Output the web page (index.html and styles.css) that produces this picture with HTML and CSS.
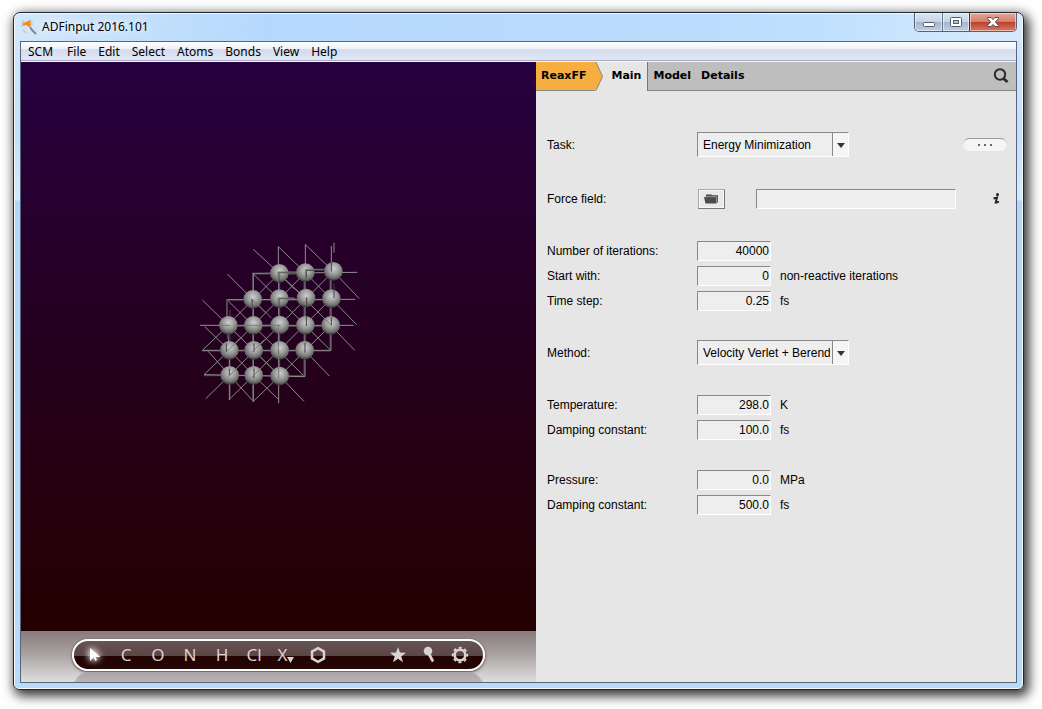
FILE: index.html
```html
<!DOCTYPE html>
<html lang="en">
<head>
<meta charset="utf-8">
<title>ADFinput 2016.101</title>
<link rel="stylesheet" href="styles.css">
</head>
<body>
<div class="window">
  <header class="titlebar">
    <svg class="app-icon" width="16" height="16" viewBox="0 0 16 16">
      <path d="M3 1Q0 4 1 8M2 10q1 3 4 4M8 1q3 1 3 5" fill="none" stroke="#cfcfcf" stroke-width="2"/>
      <path d="M9 8l2 3 4 4" fill="none" stroke="#888" stroke-width="2"/>
      <path d="M2 4l3-1 4-2 1 6-2 1-3-2-3 1z" fill="#f88a16"/>
    </svg>
    <h1 class="title">ADFinput 2016.101</h1>
    <div class="window-buttons">
      <button class="wbtn wbtn-min" aria-label="Minimize"><svg width="12" height="14" viewBox="0 0 12 14"><rect x=".5" y="7.500" width="11" height="4" rx="1" fill="#fff" stroke="#555b6b"/></svg></button>
      <button class="wbtn wbtn-max" aria-label="Maximize"><svg width="12" height="14" viewBox="0 0 12 14"><rect x=".5" y="2.500" width="11" height="9" rx="1" fill="#fff" stroke="#555b6b"/><rect x="3.500" y="5.500" width="5" height="3" fill="#b6c6d8" stroke="#555b6b"/></svg></button>
      <button class="wbtn wbtn-close" aria-label="Close"><svg width="12" height="14" viewBox="0 0 12 14"><path d="M.5 2.500h3.500L6 4.500l2-2h3.500v1L8.500 7l3 3.500v1H8L6 9.500l-2 2H.5v-1L3.500 7l-3-3.500z" fill="#fff" stroke="#5b4a55"/></svg></button>
    </div>
  </header>
  <main class="client">
    <nav class="menubar">
      <button class="menu">SCM</button><button class="menu">File</button><button class="menu">Edit</button><button class="menu">Select</button><button class="menu">Atoms</button><button class="menu">Bonds</button><button class="menu">View</button><button class="menu">Help</button>
    </nav>
    <div class="workspace">
      <section class="viewer">
        <div class="scene">
          <svg class="molecule" viewBox="0 0 515 569" preserveAspectRatio="xMidYMid meet" role="img" aria-label="Atomic structure">
            <defs>
              <radialGradient id="ball" cx=".52" cy=".36" r=".62">
                <stop offset="0" stop-color="#cecece"/><stop offset=".45" stop-color="#a0a0a0"/><stop offset=".8" stop-color="#707070"/><stop offset="1" stop-color="#383838"/>
              </radialGradient>
              <circle id="atom" r="28" fill="url(#ball)"/>
            </defs>
            <g transform="translate(169 168) scale(.33333)" fill="none">
              <g stroke="#858d88" stroke-width="3">
                <path d="M190 58l78 72M112 132l76 76M37 210l78 76M265 50l81 78M346 44l84 80M430 124l78 82M424 206l76 78M422 286l72 75M344 361l74 77M269 438l73 76M191 436l74 72M119 436l71 78M44 290l74 71M52 361l67 75"/>
                <path d="M47 506l72-70M42 434l76-73M37 361l78-75M118 508l73-72M190 514l79-76"/>
                <path d="M268 130l-78 78-80 80M346 128l-230 233M430 124L119 436M424 206L191 436M422 286L269 438"/>
                <path d="M112 210l232 230M188 130l234 231M268 130l156 156M346 128l76 78M115 286l154 152M118 361l73 75"/>
                <path d="M208 228l36 36M132 304l140 136M365 228l60 58M290 152l60 56" stroke="#707672"/>
              </g>
              <g stroke="#4d4e4d" stroke-width="3">
                <path d="M188 132h150M110 210h314M115 289h307M37 363h385M42 437h302M120 240v270M188 130v386M269 130v308M342 120v320M420 124v237"/>
              </g>
              <g stroke="#8e928f" stroke-width="3">
                <path d="M188 130l314-3M110 209l386-1M30 286h461M37 361h385M42 434l302 6M265 50v80M346 43v85M424 48v80M432 38v30M111 208v78l7 75v149M190 130v386M266 130v390M345 122v318M423 140v221"/>
              </g>
              <g>
                <use href="#atom" x="268" y="130"/><use href="#atom" x="346" y="128"/><use href="#atom" x="430" y="124"/>
                <use href="#atom" x="188" y="208"/><use href="#atom" x="268" y="206"/><use href="#atom" x="348" y="204"/><use href="#atom" x="424" y="206"/>
                <use href="#atom" x="115" y="286"/><use href="#atom" x="190" y="286"/><use href="#atom" x="269" y="285"/><use href="#atom" x="346" y="286"/><use href="#atom" x="422" y="286"/>
                <use href="#atom" x="118" y="361"/><use href="#atom" x="191" y="361"/><use href="#atom" x="269" y="361"/><use href="#atom" x="344" y="361"/>
                <use href="#atom" x="119" y="436"/><use href="#atom" x="191" y="436"/><use href="#atom" x="269" y="438"/>
              </g>
              <g stroke="#3f403f" stroke-width="3">
                <path d="M267 158v-30h50M349 145v-24h56M187 236v-28M267 228v-22h50M112 236v-28M432 160v44M192 340v25M345 338v30M424 262v24M349 260v28M192 416v28M118 416v22M109 340v26M350 202v26M424 124v-28"/>
              </g>
              <g stroke="#777977" stroke-width="3">
                <path d="M264 156v-30h58M346 143v-25h56M185 234v-28M264 226v-22h50M81 286h40M159 286h112M265 285v85M266 361v86M187 440l40-40M115 440l40-40M110 365l40-40M187 365l36-36M264 128l50 50M186 208l40 40M424 286l-50-50"/>
              </g>
            </g>
          </svg>
        </div>
        <div class="dock">
          <div class="toolbar" role="toolbar">
            <button class="tool" aria-label="Select"><svg class="glow" width="20" height="20" viewBox="0 0 20 20"><path d="M6 3v13l3.500-3.500 2 3.500 1.500-1-1.500-3h5z" fill="#fff"/></svg></button>
            <button class="tool">C</button><button class="tool">O</button><button class="tool">N</button><button class="tool">H</button><button class="tool">Cl</button>
            <button class="tool">X<svg width="7" height="6" viewBox="0 0 7 6" class="drop"><path d="M0 0h7L3.500 6z" fill="currentColor"/></svg></button>
            <button class="tool" aria-label="Ring"><svg width="18" height="18" viewBox="0 0 18 18"><path d="M9 2.200l6 3.400v6.800l-6 3.400-6-3.400V5.600z" fill="none" stroke="currentColor" stroke-width="2.500"/></svg></button>
            <span class="tool-group">
              <button class="tool" aria-label="Favorites"><svg width="18" height="18" viewBox="0 0 18 18"><path d="M9 1l2 5.600 6 .2-4.700 3.600 1.700 5.800-5-3.400-5 3.400 1.700-5.800L1 6.800l6-.2z" fill="currentColor"/></svg></button>
              <button class="tool" aria-label="Pin"><svg width="18" height="18" viewBox="0 0 18 18"><circle cx="8" cy="5" r="4.300" fill="currentColor"/><path d="M8.500 7l4 7.500" stroke="currentColor" stroke-width="2.800" stroke-linecap="round"/></svg></button>
              <button class="tool" aria-label="Settings"><svg width="18" height="18" viewBox="0 0 18 18"><circle cx="9" cy="9" r="5.300" fill="none" stroke="currentColor" stroke-width="2.600"/><circle cx="9" cy="9" r="7.200" fill="none" stroke="currentColor" stroke-width="2" stroke-dasharray="3 2.655" stroke-dashoffset="1.500"/></svg></button>
            </span>
          </div>
          <div class="reflection"></div>
        </div>
      </section>
      <section class="panel">
        <div class="tabs">
          <button class="tab tab-engine">ReaxFF<svg class="tab-point" width="9" height="29" viewBox="0 0 9 29"><path d="M0 0h1l6.500 14.500L1 28.500H0z" fill="#f6ae41"/><path d="M1 0l6.500 14.500L1 28.500" fill="none" stroke="#8b8378"/></svg></button>
          <button class="tab tab-main">Main</button>
          <button class="tab">Model</button>
          <button class="tab">Details</button>
          <button class="search" aria-label="Search"><svg width="16" height="16" viewBox="0 0 16 16"><circle cx="7" cy="6.500" r="5.200" fill="none" stroke="#2b2b2b" stroke-width="2"/><path d="M10.500 10.500l4 3.500" stroke="#2b2b2b" stroke-width="2.800"/></svg></button>
        </div>
        <form class="form">
          <div class="group group-task">
            <div class="row">
              <label class="label" for="task">Task:</label>
              <span class="choice"><select id="task"><option>Energy Minimization</option></select><svg class="caret" width="8" height="5" viewBox="0 0 8 5"><path d="M0 0h8L4 5z" fill="#333"/></svg></span>
              <button type="button" class="more" aria-label="More"><svg width="14" height="2" viewBox="0 0 14 2"><path d="M0 0h2v2H0zM6 0h2v2H6zM12 0h2v2h-2z" fill="#666"/></svg></button>
            </div>
          </div>
          <div class="group">
            <div class="row">
              <label class="label" for="ff">Force field:</label>
              <button type="button" class="browse" aria-label="Open force field"><svg width="15" height="10" viewBox="0 0 15 10"><path d="M2 2V.5h5.500L8.500 1.200H14v7.300h-1.500L12 3H2z" fill="#4c4c4c"/><path d="M0 3h12.500v6.500H1.500z" fill="#4c4c4c"/><path d="M1 2.700h11.700V8" stroke="#ccc" fill="none" stroke-width=".6"/></svg></button>
              <input class="input path" id="ff" type="text">
              <button type="button" class="info" aria-label="Information"><svg width="7" height="11" viewBox="0 0 7 11"><circle cx="4.500" cy="1.500" r="1.500" fill="#222"/><path d="M.5 5.500L4 4.500 2.700 9.500h1L6 8.500" fill="none" stroke="#222" stroke-width="1.900"/></svg></button>
            </div>
          </div>
          <div class="group">
            <div class="row"><label class="label" for="iter">Number of iterations:</label><input class="input" id="iter" type="text" value="40000"></div>
            <div class="row"><label class="label" for="start">Start with:</label><input class="input" id="start" type="text" value="0"><span class="unit">non-reactive iterations</span></div>
            <div class="row"><label class="label" for="step">Time step:</label><input class="input" id="step" type="text" value="0.25"><span class="unit">fs</span></div>
          </div>
          <div class="group">
            <div class="row">
              <label class="label" for="method">Method:</label>
              <span class="choice"><select id="method"><option>Velocity Verlet + Berendsen</option></select><svg class="caret" width="8" height="5" viewBox="0 0 8 5"><path d="M0 0h8L4 5z" fill="#333"/></svg></span>
            </div>
          </div>
          <div class="group group-heat">
            <div class="row"><label class="label" for="temp">Temperature:</label><input class="input" id="temp" type="text" value="298.0"><span class="unit">K</span></div>
            <div class="row"><label class="label" for="tdamp">Damping constant:</label><input class="input" id="tdamp" type="text" value="100.0"><span class="unit">fs</span></div>
          </div>
          <div class="group">
            <div class="row"><label class="label" for="press">Pressure:</label><input class="input" id="press" type="text" value="0.0"><span class="unit">MPa</span></div>
            <div class="row"><label class="label" for="pdamp">Damping constant:</label><input class="input" id="pdamp" type="text" value="500.0"><span class="unit">fs</span></div>
          </div>
        </form>
      </section>
    </div>
  </main>
</div>
</body>
</html>
```
FILE: styles.css
```css
* { box-sizing: border-box; }
body {
  margin: 0;
  min-height: 100vh;
  display: flex;
  padding: 12px 18px 19px 13px;
  background: #fff;
  font-family: "Liberation Sans", Arial, sans-serif;
  font-size: 12px;
  color: #000;
}
button { border: 0; padding: 0; margin: 0; background: none; color: inherit; font: inherit; }
svg { display: block; }

.window {
  flex: 1;
  display: flex;
  flex-direction: column;
  padding: 0 6px 6px;
  border: 1px solid #1f2830;
  border-radius: 7px 7px 6px 6px;
  background:
    linear-gradient(100deg, #d3e8fc 0, #c4e0fb 12%, #b5d9fd 25%, #b9dbfc 60%, #bfe0ff 80%, #d6e9fc 96%) top / 100% 28px no-repeat,
    linear-gradient(#d6e8fb 0, #c3dff9 120px, #d6eafd 187px, #b4d6f7 188px, #bbdaf9 100%);
  box-shadow: inset 0 0 0 1px #f2faff, 3px 4px 12px 2px rgba(0, 0, 0, .8);
}
.titlebar { display: flex; align-items: flex-start; height: 28px; }
.app-icon { margin: 6px 0 0 1px; }
.title {
  margin: 5px 0 0 5px;
  font: 12px/18px "Noto Sans", "Open Sans", sans-serif;
  text-shadow: 0 0 8px #fff, 0 0 8px #fff;
}
.window-buttons {
  display: flex;
  margin-left: auto;
  height: 19px;
  border: 1px solid #566273;
  border-top: 0;
  border-radius: 0 0 5px 5px;
  overflow: hidden;
}
.wbtn {
  display: flex;
  align-items: center;
  justify-content: center;
  width: 27px;
  background: linear-gradient(#dbe6f2 0, #c5d4e4 48%, #a3b6ce 50%, #bed0e4 100%);
  box-shadow: inset 0 0 0 1px rgba(255, 255, 255, .5);
}
.wbtn-max { border-left: 1px solid #66768a; }
.wbtn-close {
  width: 47px;
  border-left: 1px solid #5b2626;
  background: linear-gradient(#e5a799 0, #d57d6b 48%, #b93e27 50%, #d97a63 100%);
}

.client {
  flex: 1;
  display: flex;
  flex-direction: column;
  border: 1px solid #55677a;
  background: #e6e6e6;
}
.menubar {
  display: flex;
  height: 20px;
  padding-left: 1px;
  border-bottom: 1px solid #f5f6fb;
  background: linear-gradient(#fff 0, #eef1f8 35%, #d4dbed 40%, #dfe6f5 94%, #a9abc0 95%);
}
.menu { padding: 0 6px; font: 12px/19px "Noto Sans", "Open Sans", sans-serif; }
.menu:first-child { padding-right: 8px; }
.workspace { flex: 1; display: grid; grid-template-columns: 515fr 480fr; }

.viewer { display: flex; flex-direction: column; min-width: 0; }
.scene { flex: 1; position: relative; background: linear-gradient(#27003f, #240000); }
.molecule { position: absolute; inset: 0; width: 100%; height: 100%; }
.dock {
  height: 51px;
  padding: 8px 51px 0;
  overflow: hidden;
  background: linear-gradient(#877b7b, #aaa2a2 45%, #dedede);
}
.toolbar {
  display: flex;
  align-items: center;
  height: 32px;
  padding: 0 8px 0 4px;
  border: 2px solid #fff;
  border-radius: 16px;
  background: linear-gradient(#665454 0, #5b4545 53%, #230202 55%, #260505 100%);
  box-shadow: 0 1px 3px #4b3b3b;
  color: #d8d2d2;
  font: 17px/28px "Noto Sans", "Open Sans", sans-serif;
}
.tool { display: flex; flex: 0 0 32px; align-items: center; justify-content: center; height: 28px; }
.tool-group { display: flex; margin-left: auto; }
.tool-group .tool { flex-basis: 31px; }
.drop { margin-top: 10px; }
.glow { filter: drop-shadow(0 0 3px #fff) drop-shadow(0 0 3px #fff8); }
.reflection {
  height: 32px;
  margin-top: 1px;
  border: 2px solid #d2cece;
  border-top: 0;
  border-radius: 16px;
  background: linear-gradient(#aaa3a3, #bbb6b6 10px);
}

.panel { display: flex; flex-direction: column; min-width: 0; background: #e6e6e6; }
.tabs {
  display: flex;
  height: 29px;
  border-bottom: 1px solid #858585;
  background: #bebebe;
  font: bold 11px/28px "DejaVu Sans", Verdana, sans-serif;
}
.tab { padding: 0 5px; height: 28px; }
.tab-engine { position: relative; height: 29px; padding-right: 9px; background: #f6ae41; border-bottom: 1px solid #858585; }
.tab-point { position: absolute; left: 100%; top: 0; }
.tab-main { height: 29px; padding: 0 6px 1px 16px; background: #e6e6e6; border-right: 1px solid #777; }
.search { margin: 6px 7px 0 auto; align-self: flex-start; }

.form { padding: 41px 9px 0 11px; }
.group { margin-bottom: 27px; }
.group-task { margin-bottom: 29px; }
.group-heat { margin-bottom: 25px; }
.row { display: flex; align-items: center; height: 25px; }
.label { flex: 0 0 150px; }
.unit { margin-left: 9px; }
.input {
  width: 74px;
  height: 20px;
  margin: 0;
  padding: 0 1px;
  border: 1px solid #fff;
  border-top-color: #888;
  border-left-color: #888;
  background: #eee;
  font: inherit;
  text-align: right;
}
.path { width: 200px; margin-left: 31px; text-align: left; }
.choice { position: relative; width: 152px; }
.choice select {
  display: block;
  appearance: none;
  width: 100%;
  height: 25px;
  margin: 0;
  padding: 0 18px 0 5px;
  border: 1px solid #fff;
  border-top-color: #888;
  border-left-color: #888;
  border-radius: 0;
  background: linear-gradient(to left, #f5f5f5 15px, #888 15px, #888 16px, #eee 16px);
  color: #000;
  font: inherit;
}
.caret { position: absolute; right: 4px; top: 11px; }
.browse {
  display: flex;
  align-items: center;
  justify-content: center;
  width: 27px;
  height: 20px;
  margin-left: 1px;
  border: 1px solid #777;
  border-top-color: #aaa;
  border-left-color: #aaa;
  background: #e9e9e9;
  box-shadow: inset 0 0 0 1px #f7f7f7;
}
.more {
  display: flex;
  align-items: center;
  justify-content: center;
  width: 44px;
  height: 13px;
  margin-left: auto;
  border-top: 1px solid #999;
  border-radius: 7px;
  background: #f5f5f5;
}
.info { margin: 0 7px 0 auto; }
```
